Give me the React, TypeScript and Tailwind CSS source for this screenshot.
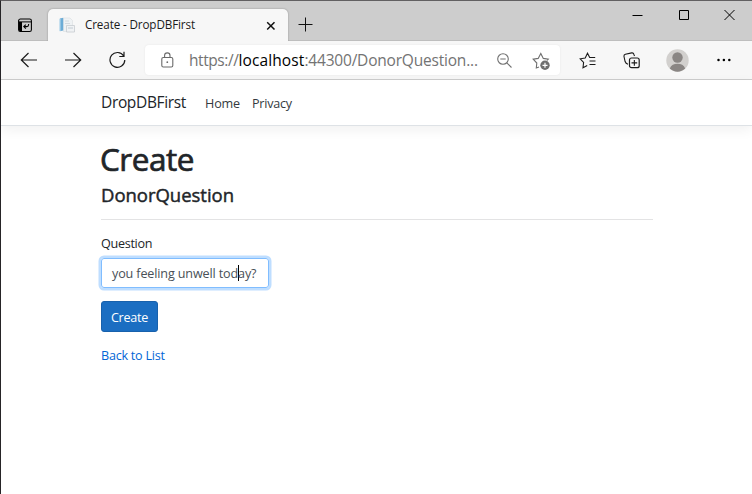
import type { ReactNode } from "react";

function Icon({ w = 16, h = 16, className = "", children }: { w?: number; h?: number; className?: string; children: ReactNode }) {
  return (
    <svg width={w} height={h} viewBox={`0 0 ${w} ${h}`} fill="none" stroke="currentColor" strokeWidth="1.1" className={`block shrink-0 ${className}`}>
      {children}
    </svg>
  );
}

function TabStrip() {
  return (
    <div className="flex h-10 shrink-0 bg-[#cdcdcd] shadow-[inset_0_-1px_0_#bebebe]">
      <div className="flex w-[47px] pt-[17px] pl-[17px]">
        <Icon w={15} h={15} className="text-black">
          <rect x="0.6" y="1" width="12.8" height="12.5" rx="1.8" />
          <path d="M1 4h3v9.500H2L1 12.500z" fill="currentColor" stroke="none" />
          <path d="M1 3.900h12.500" strokeWidth="1" />
          <path d="M10.600 6v.8c0 1.200-.6 1.800-1.800 1.800H6M7.800 6.600l-2 2 2 2" strokeWidth="1.100" />
        </Icon>
      </div>
      <div className="mt-2 flex h-8 w-[240px] items-center rounded-t-[5px] bg-[#f7f7f7] pl-[11px] shadow-[0_0_2px_#8a8a8a]">
        <Icon w={17} h={17} className="mt-[1px]">
          <path d="M4.500 1h6.500l2.500 2.500v11h-9z" fill="#eff2f4" stroke="#dde1e4" strokeWidth="0.7" />
          <path d="M6 4h4M6 6.500h5" stroke="#cfd6dc" strokeWidth="0.9" />
          <path d="M7.500 8.500h8v6.500h-8z" fill="#f0f2f4" stroke="#c6ccd1" strokeWidth="0.8" />
          <path d="M9 11h5" stroke="#bcc6cf" strokeWidth="0.9" />
          <path d="M.8 1.500 4.200.8v12.700l-3.400.7z" fill="#6cacd6" stroke="none" />
          <path d="M1 2v12" stroke="#b8dbee" />
        </Icon>
        <span className="ml-[9px] w-[176px] text-[11.7px] tracking-[-0.14px] whitespace-nowrap text-[#1b1b1b]">Create - DropDBFirst</span>
        <Icon w={10} h={10} className="mt-[1px] ml-[5px] text-[#111]">
          <path d="m1.200 1.200 7.300 7.300M8.500 1.200 1.200 8.500" strokeWidth="1.5" />
        </Icon>
      </div>
      <Icon w={15} h={15} className="mt-4 ml-[10px] text-[#111]">
        <path d="M7.500.5v14M.5 7.500h14" strokeWidth="1" />
      </Icon>
      <div className="ml-auto flex pt-2 pr-[17px] text-black">
        <Icon w={11} h={12}>
          <path d="M.5 6.500h10" strokeWidth="1" />
        </Icon>
        <Icon w={11} h={12} className="ml-[35px]">
          <path d="M1.500 1.500h9v9h-9z" strokeWidth="1" />
        </Icon>
        <Icon w={11} h={12} className="ml-[35px]">
          <path d="m.5 1 10 10M10.500 1l-10 10" strokeWidth="1" />
        </Icon>
      </div>
    </div>
  );
}

function Toolbar() {
  return (
    <div className="flex h-[39px] shrink-0 items-center border-b border-[#cdcdcd] bg-[#f7f7f7] text-[#1b1b1b]">
      <Icon w={17} h={16} className="-mt-px ml-[19px]">
        <path d="M8.500 1 1.300 8l7.200 7M1.300 8H17" strokeWidth="1.2" />
      </Icon>
      <Icon w={17} h={16} className="-mt-px ml-[28px]">
        <path d="m8.500 1 7.200 7-7.200 7M15.700 8H0" strokeWidth="1.200" />
      </Icon>
      <Icon w={17} h={18} className="ml-[27px]">
        <path d="M14.700 5A7.400 7.400 0 1 0 15.800 9M15 .8v4.700h-4.700" strokeWidth="1.200" />
      </Icon>
      <div className="ml-[19px] flex h-[30px] w-[415px] items-center rounded-[4px] bg-white shadow-[0_0_2px_#e4e4e4]">
        <Icon w={13} h={16} className="-mt-px ml-4 text-[#6a6a6a]">
          <rect x="0.8" y="5.500" width="11" height="9.500" rx="1.500" />
          <path d="M3.600 5.500V3.600a2.700 2.700 0 0 1 5.400 0v1.900" />
          <circle cx="6.300" cy="10.200" r="0.900" fill="currentColor" stroke="none" />
        </Icon>
        <div className="ml-[15px] flex w-[292px] pt-[1px] text-[15.5px] whitespace-pre text-[#737373]">
          <span className="tracking-[-0.43px]">https://</span>
          <span className="tracking-[0.12px] text-black">localhost</span>
          <span className="tracking-[-0.2px]">:44300/DonorQuestion...</span>
        </div>
        <Icon w={15} h={15} className="ml-[16px] text-[#717171]">
          <circle cx="6" cy="6" r="5.300" />
          <path d="m9.800 9.800 4.700 4.700M3.300 6h5.400" />
        </Icon>
        <Icon w={18} h={18} className="mt-px ml-[20px] text-[#6f6f6f]">
          <path d="M7 15 4.300 16l.5-5L1.200 7.200l5-.8 2.600-5 2.500 5 5 .8-1.200 1.300" />
          <circle cx="13" cy="13.300" r="4.700" fill="currentColor" stroke="none" />
          <path d="M13 10.800v5M10.500 13.300h5" stroke="#fff" strokeWidth="1.200" />
        </Icon>
      </div>
      <Icon w={17} h={17} className="ml-[19px]">
        <path d="m8.200 13.600-4.200 2.100.6-5.200L1.200 6.800l5-.8L8.500 1.200 10.700 5.500h5.500M10.500 9h6M10.500 12.500h6" />
      </Icon>
      <Icon w={17} h={17} className="ml-[27px]">
        <rect x="6.500" y="6" width="9.700" height="9.700" rx="2" strokeWidth="1.200" />
        <path d="M11.350 8v5.700M8.500 10.850h5.700" strokeWidth="1.100" />
        <path d="M5 12.200C3.300 11.700 2.500 10.700 2.100 9.500L1 4.500C.8 3.200 1.100 2.600 2.400 2.300L8.700.9c1.200-.2 1.900.3 2.200 1.500l.6 1.600" />
      </Icon>
      <Icon w={23} h={23} className="ml-[26px]">
        <circle cx="11.500" cy="11.500" r="11.200" fill="#d2d0ce" stroke="none" />
        <circle cx="11.500" cy="8.500" r="5.200" fill="#8a8684" stroke="none" />
        <path d="M3.800 19.500c1.200-3.300 4.200-4.700 7.700-4.700s6.500 1.400 7.700 4.700a11 11 0 0 1-15.400 0" fill="#8a8684" stroke="none" />
      </Icon>
      <Icon w={14} h={4} className="ml-[28px] text-black">
        <g fill="currentColor" stroke="none">
          <circle cx="1.500" cy="2" r="1.250" />
          <circle cx="6.900" cy="2" r="1.250" />
          <circle cx="12.300" cy="2" r="1.250" />
        </g>
      </Icon>
    </div>
  );
}

export default function App() {
  return (
    <div className="flex h-[494px] w-[752px] flex-col overflow-hidden border-t border-l border-t-[#626062] border-l-[#262427] bg-white font-['Open_Sans','Noto_Sans',sans-serif] text-[#212529]">
      <TabStrip />
      <Toolbar />
      <nav className="flex h-[46px] shrink-0 items-center border-b border-[#dee2e6] pl-[100px] shadow-[0_4px_12px_rgba(0,0,0,0.06)]">
        <a className="w-[104px] pt-[1px] text-[15.5px] tracking-[-0.35px]">DropDBFirst</a>
        <a className="w-[47px] pt-[3px] text-[12.6px] tracking-[-0.15px] text-[#343a40]">Home</a>
        <a className="pt-[3px] text-[12.6px] tracking-[-0.25px] text-[#343a40]">Privacy</a>
      </nav>
      <main className="flex flex-col items-start pl-[100px]">
        <h1 className="-ml-px mt-[13px] text-[31.5px] leading-10 tracking-[-0.5px] [-webkit-text-stroke:0.7px_#212529]">Create</h1>
        <h4 className="mt-[4px] text-[18.5px] leading-6 tracking-[-0.02px] [-webkit-text-stroke:0.45px_#212529]">DonorQuestion</h4>
        <hr className="mt-[12px] w-[552px] border-[#e3e3e4]" />
        <label className="mt-[14px] text-[12.6px] leading-5 tracking-[-0.3px]">Question</label>
        <div className="mt-[4px] flex h-[30px] w-[168px] items-center rounded-[3px] border border-[#80bdff] pl-[10px] shadow-[0_0_0_2.5px_#bfdeff]">
          <div className="flex pt-[2px] text-[12.6px] leading-5 tracking-[-0.14px] whitespace-pre text-[#495057]">
            <span>you feeling unwell tod</span>
            <span className="-mt-[2px] -mr-px h-4 w-px self-center bg-black" />
            <span>ay?</span>
          </div>
        </div>
        <button className="mt-[13px] flex h-[31px] w-[57px] items-center justify-center rounded-[3px] border border-[#1861ac] bg-[#1b6ec2] pt-[3px] text-[12.6px] tracking-[-0.25px] text-white">
          Create
        </button>
        <a className="mt-[14px] text-[12.6px] leading-5 tracking-[-0.24px] text-[#0366d6]">Back to List</a>
      </main>
    </div>
  );
}
